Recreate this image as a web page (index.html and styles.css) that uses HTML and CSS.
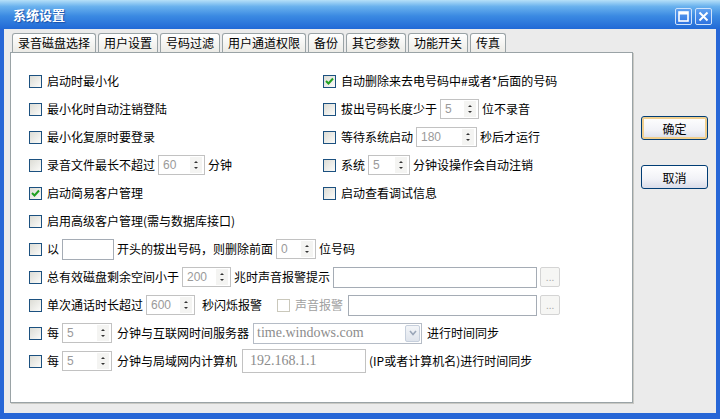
FILE: index.html
```html
<!DOCTYPE html>
<html lang="zh-CN">
<head>
    <meta charset="UTF-8">
    <title>系统设置</title>
    <link rel="stylesheet" href="styles.css">
</head>
<body>
    <div class="window">
        <div class="titlebar">
            <span class="title">系统设置</span>
            <div class="caption-btns">
                <span class="cap-btn">
                    <svg width="11" height="11" viewBox="0 0 11 11"><rect x="1" y="1" width="9" height="9" fill="none" stroke="#fff" stroke-width="1.6"/><rect x="1" y="1" width="9" height="2.5" fill="#fff"/></svg>
                </span>
                <span class="cap-btn">
                    <svg width="11" height="11" viewBox="0 0 11 11"><path d="M1.5 1.5 L9.5 9.5 M9.5 1.5 L1.5 9.5" stroke="#fff" stroke-width="2"/></svg>
                </span>
            </div>
        </div>
        <div class="frame">
            <div class="tabs-area">
                <div class="tabs">
                    <span class="tab">录音磁盘选择</span>
                    <span class="tab">用户设置</span>
                    <span class="tab">号码过滤</span>
                    <span class="tab">用户通道权限</span>
                    <span class="tab">备份</span>
                    <span class="tab">其它参数</span>
                    <span class="tab">功能开关</span>
                    <span class="tab">传真</span>
                </div>
                <div class="panel">
                    <div class="split">
                        <div class="row"><span class="cb"></span><span>启动时最小化</span></div>
                        <div class="row"><span class="cb checked"><svg width="9" height="8" viewBox="0 0 9 8"><path d="M1 4 L3.5 6.5 L8 1.5" fill="none" stroke="#21a121" stroke-width="2"/></svg></span><span>自动删除来去电号码中#或者*后面的号码</span></div>

                        <div class="row"><span class="cb"></span><span>最小化时自动注销登陆</span></div>
                        <div class="row"><span class="cb"></span><span>拔出号码长度少于</span><span class="spin w39"><span class="val">5</span><span class="arrows"><i class="up"></i><i class="down"></i></span></span><span>位不录音</span></div>

                        <div class="row"><span class="cb"></span><span>最小化复原时要登录</span></div>
                        <div class="row"><span class="cb"></span><span>等待系统启动</span><span class="spin w61"><span class="val">180</span><span class="arrows"><i class="up"></i><i class="down"></i></span></span><span>秒后才运行</span></div>

                        <div class="row"><span class="cb"></span><span>录音文件最长不超过</span><span class="spin w47"><span class="val">60</span><span class="arrows"><i class="up"></i><i class="down"></i></span></span><span>分钟</span></div>
                        <div class="row"><span class="cb"></span><span>系统</span><span class="spin w42"><span class="val">5</span><span class="arrows"><i class="up"></i><i class="down"></i></span></span><span>分钟设操作会自动注销</span></div>

                        <div class="row"><span class="cb checked"><svg width="9" height="8" viewBox="0 0 9 8"><path d="M1 4 L3.5 6.5 L8 1.5" fill="none" stroke="#21a121" stroke-width="2"/></svg></span><span>启动简易客户管理</span></div>
                        <div class="row"><span class="cb"></span><span>启动查看调试信息</span></div>
                    </div>

                    <div class="row"><span class="cb"></span><span>启用高级客户管理(需与数据库接口)</span></div>

                    <div class="row"><span class="cb"></span><span>以</span><span class="field w52"></span><span>开头的拔出号码，则删除前面</span><span class="spin w40"><span class="val">0</span><span class="arrows"><i class="up"></i><i class="down"></i></span></span><span>位号码</span></div>

                    <div class="row"><span class="cb"></span><span>总有效磁盘剩余空间小于</span><span class="spin w49"><span class="val">200</span><span class="arrows"><i class="up"></i><i class="down"></i></span></span><span>兆时声音报警提示</span><span class="field w204"></span><span class="dots">...</span></div>

                    <div class="row"><span class="cb"></span><span>单次通话时长超过</span><span class="spin w49"><span class="val">600</span><span class="arrows"><i class="up"></i><i class="down"></i></span></span><span class="gap-l">秒闪烁报警</span><span class="cb disabled gap-xl"></span><span class="muted">声音报警</span><span class="field w189 gap-s"></span><span class="dots">...</span></div>

                    <div class="row"><span class="cb"></span><span>每</span><span class="spin w50"><span class="val">5</span><span class="arrows"><i class="up"></i><i class="down"></i></span></span><span class="gap-s">分钟与互联网时间服务器</span><span class="combo"><span class="serif">time.windows.com</span><span class="drop"><svg width="8" height="6" viewBox="0 0 8 6"><path d="M1 1 L4 4.5 L7 1" fill="none" stroke="#9aa6b8" stroke-width="1.6"/></svg></span></span><span class="gap-s">进行时间同步</span></div>

                    <div class="row"><span class="cb"></span><span>每</span><span class="spin w50"><span class="val">5</span><span class="arrows"><i class="up"></i><i class="down"></i></span></span><span class="gap-s">分钟与局域网内计算机</span><span class="field tall w124 gap-s"><span class="serif">192.168.1.1</span></span><span>(IP或者计算机名)进行时间同步</span></div>
                </div>
            </div>
            <div class="side">
                <button class="btn default">确定</button>
                <button class="btn">取消</button>
            </div>
        </div>
    </div>
</body>
</html>
```

FILE: styles.css
```css
body {
    margin: 0;
    font-family: "Noto Sans CJK SC", "Liberation Sans", sans-serif;
    font-size: 12px;
    line-height: 14px;
    color: #000;
}
.window {
    width: 720px;
    height: 419px;
    display: flex;
    flex-direction: column;
    overflow: hidden;
}
.titlebar {
    height: 29px;
    flex: none;
    display: flex;
    align-items: center;
    justify-content: space-between;
    padding: 0 8px 0 13px;
    background: linear-gradient(to bottom, #b6e0f8 0%, #6ab2ee 22%, #3b8ae2 55%, #2169d6 100%);
}
.title {
    color: #fff;
    font-weight: bold;
    font-size: 13px;
    text-shadow: 1px 1px 1px #1a4fa8;
    margin-top: 1px;
}
.caption-btns {
    display: flex;
    gap: 3px;
    margin-top: 3px;
}
.cap-btn {
    width: 17px;
    height: 17px;
    box-sizing: border-box;
    border: 1px solid #cfe3fb;
    border-radius: 2px;
    background: linear-gradient(to bottom, #5ea0f0, #2f74e0);
    display: flex;
    align-items: center;
    justify-content: center;
}
.frame {
    flex: 1;
    display: flex;
    background: #ebebeb;
    border-left: 4px solid #2766d6;
    border-right: 4px solid #2766d6;
    border-bottom: 6px solid #2766d6;
}
.tabs-area {
    width: 623px;
    padding: 4px 0 0 6px;
    display: flex;
    flex-direction: column;
}
.tabs {
    display: flex;
    gap: 2px;
    padding-left: 2px;
    height: 19px;
}
.tab {
    padding: 0 5px;
    border: 1px solid #9aa3a6;
    border-bottom: none;
    border-radius: 3px 3px 0 0;
    background: linear-gradient(to bottom, #ffffff, #ecebe6);
    line-height: 18px;
    white-space: nowrap;
}
.panel {
    height: 351px;
    box-sizing: border-box;
    background: #fff;
    border: 1px solid #9aa3a6;
    box-shadow: 1px 1px 0 #c9c9c4;
    padding: 14px 0 0 18px;
}
.split {
    display: grid;
    grid-template-columns: 294px 1fr;
}
.row {
    height: 28px;
    display: flex;
    align-items: center;
    gap: 3px;
    white-space: nowrap;
}
.cb {
    width: 13px;
    height: 13px;
    box-sizing: border-box;
    border: 1px solid #1c5180;
    background: linear-gradient(135deg, #dcdcd5, #fbfbf9);
    margin-right: 2px;
    display: flex;
    align-items: center;
    justify-content: center;
    flex: none;
}
.cb.disabled {
    border-color: #cac8bb;
    background: #fff;
}
.muted {
    color: #a0a0a0;
}
.gap-s { margin-left: 2px; }
.gap-l { margin-left: 4px; }
.gap-xl { margin-left: 12px; }
.spin {
    height: 20px;
    box-sizing: border-box;
    border: 1px solid #c2c2c2;
    display: flex;
    align-items: center;
    justify-content: space-between;
    font-family: "Liberation Sans", sans-serif;
    color: #9a9a9a;
    padding-left: 4px;
}
.arrows {
    width: 12px;
    height: 16px;
    margin-right: 2px;
    background: #f4f4f2;
    display: flex;
    flex-direction: column;
    align-items: center;
    justify-content: center;
    gap: 4px;
}
.arrows i {
    width: 0;
    height: 0;
    border-left: 2px solid transparent;
    border-right: 2px solid transparent;
}
.arrows .up { border-bottom: 2px solid #333; }
.arrows .down { border-top: 2px solid #333; }
.w39 { width: 39px; }
.w40 { width: 40px; }
.w42 { width: 42px; }
.w47 { width: 47px; }
.w49 { width: 49px; }
.w50 { width: 50px; }
.w61 { width: 61px; }
.w52 { width: 52px; }
.w124 { width: 124px; }
.w189 { width: 189px; }
.w204 { width: 204px; }
.field {
    height: 21px;
    box-sizing: border-box;
    border: 1px solid #a5acb5;
    background: #fff;
    display: flex;
    align-items: center;
    padding-left: 7px;
}
.field.tall {
    height: 24px;
    border-color: #c2c2c2;
}
.serif {
    font-family: "Liberation Serif", serif;
    font-size: 14px;
    color: #8c8c8c;
}
.dots {
    width: 20px;
    height: 20px;
    box-sizing: border-box;
    border: 1px solid #d4d4d4;
    border-radius: 2px;
    background: #f6f6f4;
    color: #aaa;
    font-size: 10px;
    display: flex;
    align-items: center;
    justify-content: center;
}
.combo {
    width: 169px;
    height: 21px;
    margin-left: 1px;
    box-sizing: border-box;
    border: 1px solid #b5bcc6;
    display: flex;
    align-items: center;
    justify-content: space-between;
    padding: 0 1px 0 3px;
}
.drop {
    width: 15px;
    height: 17px;
    box-sizing: border-box;
    border: 1px solid #c6cfdc;
    border-radius: 2px;
    background: linear-gradient(to bottom, #f3f5f8, #dfe4ec);
    display: flex;
    align-items: center;
    justify-content: center;
}
.side {
    display: flex;
    flex-direction: column;
    gap: 25px;
    padding: 87px 0 0 8px;
}
.btn {
    width: 67px;
    height: 24px;
    border: 1px solid #003c74;
    border-radius: 3px;
    background: linear-gradient(to bottom, #ffffff, #f1f2f7 60%, #d9dce9);
    font-family: "Noto Sans CJK SC", sans-serif;
    font-size: 12px;
    padding: 0;
}
.btn.default {
    box-shadow: inset 0 0 0 2px #f0cf8e;
}
```
